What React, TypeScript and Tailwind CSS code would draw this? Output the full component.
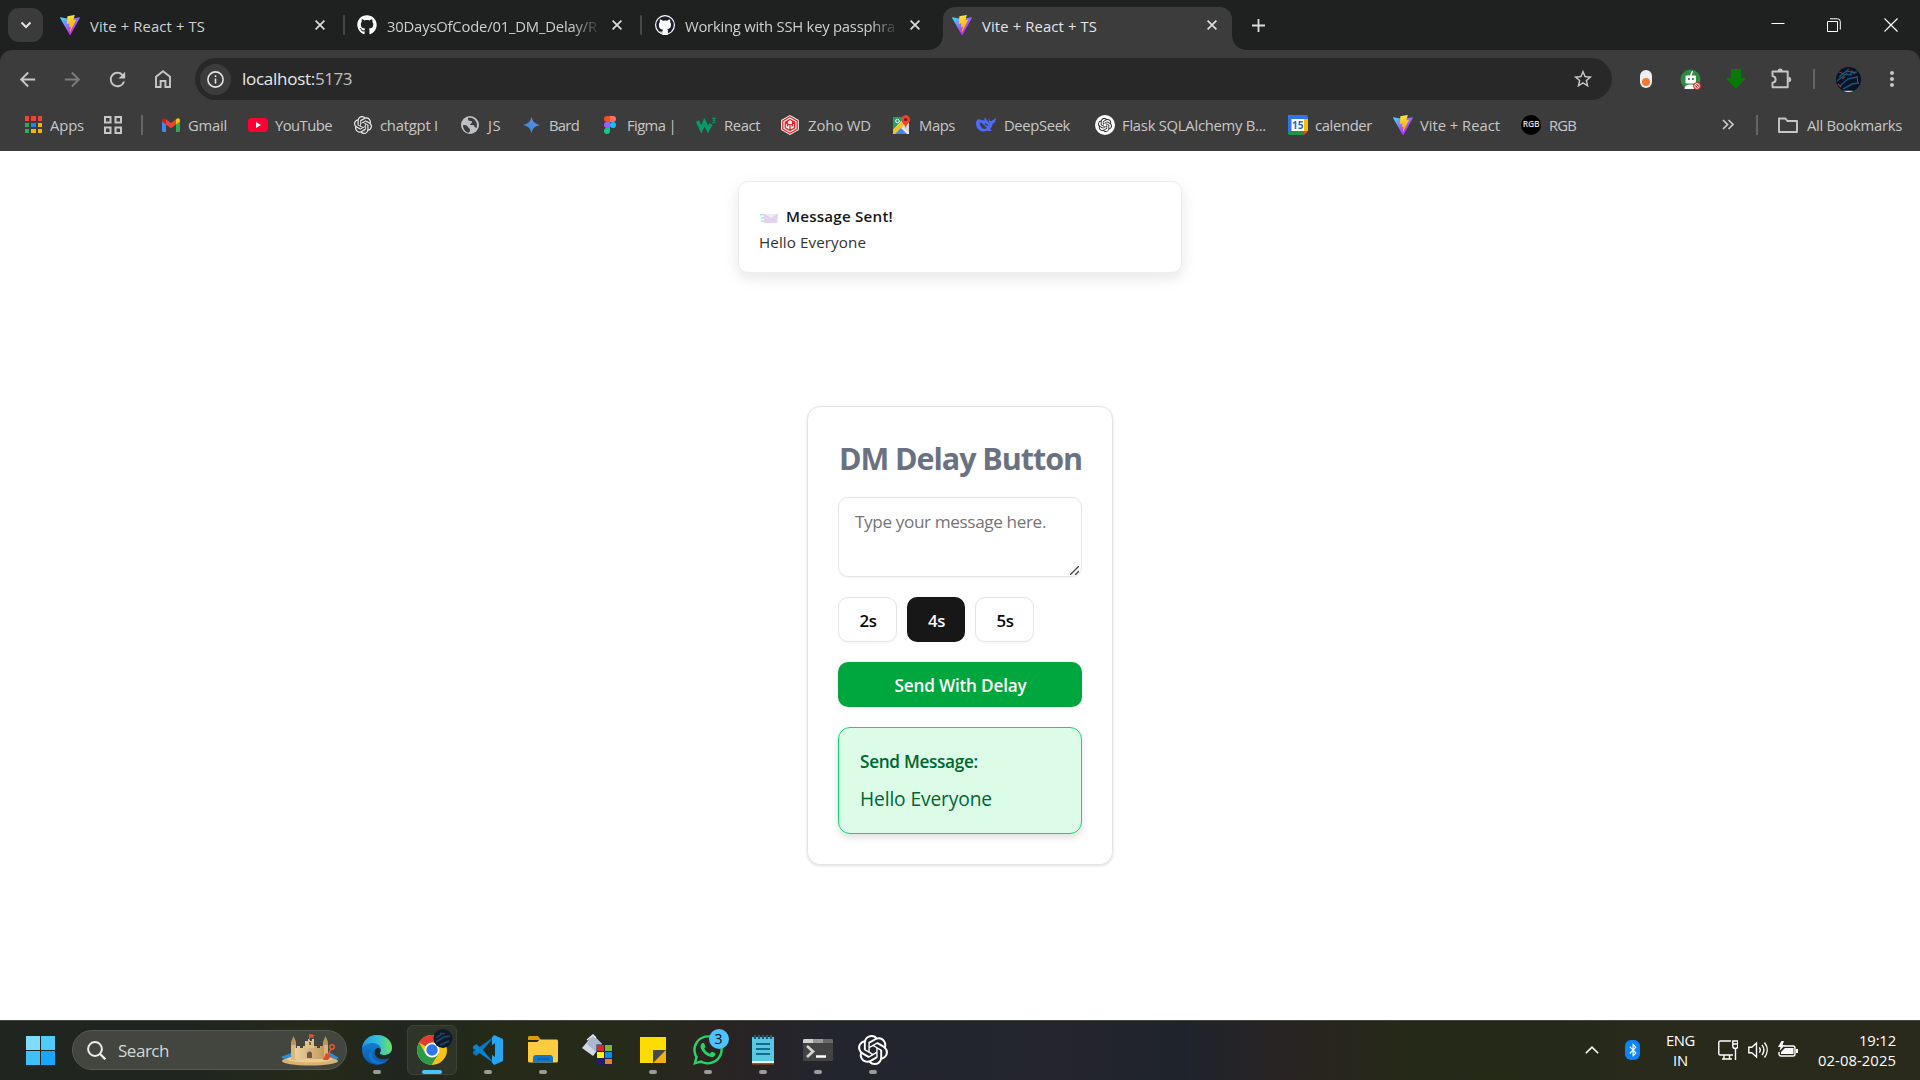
import { useLayoutEffect, useRef, type ReactNode } from "react";
import { FaGithub, FaWhatsapp, FaBluetoothB } from "react-icons/fa";
import { MdArrowBack, MdArrowForward, MdRefresh, MdStarOutline, MdMoreVert } from "react-icons/md";

/* Single line of text tracked so that it fills a given width. */
function Fit({ t, w, className = "" }: { t: string; w: number; className?: string }) {
  const ref = useRef<HTMLSpanElement>(null);
  useLayoutEffect(() => {
    const el = ref.current;
    if (!el) return;
    el.style.letterSpacing = "0px";
    const natural = el.getBoundingClientRect().width;
    el.style.letterSpacing = `${(w - natural) / t.length}px`;
  }, [t, w]);
  return (
    <span className={`block shrink-0 whitespace-nowrap ${className}`} style={{ width: w }}>
      <span ref={ref} className="inline-block">{t}</span>
    </span>
  );
}

function Vite({ id }: { id: string }) {
  return (
    <svg className="h-5 w-5 shrink-0" viewBox="0 0 256 257">
      <defs>
        <linearGradient id={`${id}a`} x1="0%" x2="57%" y1="10%" y2="78%">
          <stop offset="0%" stopColor="#41D1FF" />
          <stop offset="100%" stopColor="#BD34FE" />
        </linearGradient>
        <linearGradient id={`${id}b`} x1="43%" x2="50%" y1="2%" y2="89%">
          <stop offset="0%" stopColor="#FFEA83" />
          <stop offset="8%" stopColor="#FFDD35" />
          <stop offset="100%" stopColor="#FFA800" />
        </linearGradient>
      </defs>
      <path fill={`url(#${id}a)`} d="M255.153 37.938L134.897 252.976c-2.483 4.44-8.862 4.466-11.382.048L.875 37.958c-2.746-4.814 1.371-10.646 6.827-9.67l120.385 21.517a6.537 6.537 0 0 0 2.322-.004l117.867-21.483c5.438-.991 9.574 4.796 6.877 9.62Z" />
      <path fill={`url(#${id}b)`} d="M185.432.063L96.44 17.501a3.268 3.268 0 0 0-2.634 3.014l-5.474 92.456a3.268 3.268 0 0 0 3.997 3.378l24.777-5.718c2.318-.535 4.413 1.507 3.936 3.838l-7.361 36.047c-.495 2.426 1.782 4.5 4.151 3.78l15.304-4.649c2.372-.72 4.652 1.36 4.15 3.788l-11.698 56.621c-.732 3.542 3.979 5.473 5.943 2.437l1.313-2.028l72.516-144.72c1.215-2.423-.88-5.186-3.54-4.672l-25.505 4.922c-2.396.462-4.435-1.77-3.759-4.114l16.646-57.705c.677-2.35-1.37-4.583-3.769-4.113Z" />
    </svg>
  );
}

function OpenAI({ className }: { className: string }) {
  return (
    <svg className={className} viewBox="0 0 24 24" fill="currentColor">
      <path d="M22.2819 9.8211a5.9847 5.9847 0 0 0-.5157-4.9108 6.0462 6.0462 0 0 0-6.5098-2.9A6.0651 6.0651 0 0 0 4.9807 4.1818a5.9847 5.9847 0 0 0-3.9977 2.9 6.0462 6.0462 0 0 0 .7427 7.0966 5.98 5.98 0 0 0 .511 4.9107 6.051 6.051 0 0 0 6.5146 2.9001A5.9847 5.9847 0 0 0 13.2599 24a6.0557 6.0557 0 0 0 5.7718-4.2058 5.9894 5.9894 0 0 0 3.9977-2.9001 6.0557 6.0557 0 0 0-.7475-7.0729zm-9.022 12.6081a4.4755 4.4755 0 0 1-2.8764-1.0408l.1419-.0804 4.7783-2.7582a.7948.7948 0 0 0 .3927-.6813v-6.7369l2.02 1.1686a.071.071 0 0 1 .038.052v5.5826a4.504 4.504 0 0 1-4.4945 4.4944zm-9.6607-4.1254a4.4708 4.4708 0 0 1-.5346-3.0137l.142.0852 4.783 2.7582a.7712.7712 0 0 0 .7806 0l5.8428-3.3685v2.3324a.0804.0804 0 0 1-.0332.0615L9.74 19.9502a4.4992 4.4992 0 0 1-6.1408-1.6464zM2.3408 7.8956a4.485 4.485 0 0 1 2.3655-1.9728V11.6a.7664.7664 0 0 0 .3879.6765l5.8144 3.3543-2.0201 1.1685a.0757.0757 0 0 1-.071 0l-4.8303-2.7865A4.504 4.504 0 0 1 2.3408 7.872zm16.5963 3.8558L13.1038 8.364 15.1192 7.2a.0757.0757 0 0 1 .071 0l4.8303 2.7913a4.4944 4.4944 0 0 1-.6765 8.1042v-5.6772a.79.79 0 0 0-.407-.667zm2.0107-3.0231l-.142-.0852-4.7735-2.7818a.7759.7759 0 0 0-.7854 0L9.409 9.2297V6.8974a.0662.0662 0 0 1 .0284-.0615l4.8303-2.7866a4.4992 4.4992 0 0 1 6.6802 4.66zM8.3065 12.863l-2.02-1.1638a.0804.0804 0 0 1-.038-.0567V6.0742a4.4992 4.4992 0 0 1 7.3757-3.4537l-.142.0805L8.704 5.459a.7948.7948 0 0 0-.3927.6813zm1.0976-2.3654l2.602-1.4998 2.6069 1.4998v2.9994l-2.5974 1.4997-2.6067-1.4997Z" />
    </svg>
  );
}

function Cross({ className = "" }: { className?: string }) {
  return (
    <svg className={`h-2.5 w-2.5 shrink-0 ${className}`} viewBox="0 0 10 10" stroke="#dedede" strokeWidth="1.7">
      <path d="M.6.6l8.8 8.8M9.4.6L.6 9.4" />
    </svg>
  );
}

function TabStrip() {
  return (
    <div className="flex h-[50px] items-center bg-[#1f2120] text-[14.8px] text-[#cfd0cf]">
      <div className="-mt-px ml-2 flex h-[34px] w-[35px] shrink-0 items-center justify-center rounded-[11px] bg-[#3b3b3b]">
        <svg className="h-2 w-3" viewBox="0 0 12 8" fill="none" stroke="#e3e3e3" strokeWidth="2"><path d="M1.5 1.5L6 6l4.5-4.5" /></svg>
      </div>
      <div className="ml-[17px] flex shrink-0 items-center">
        <Vite id="v1" />
        <Fit t="Vite + React + TS" w={115} className="mt-0.5 ml-2.5" />
        <Cross className="ml-[110px]" />
      </div>
      <div className="ml-[18px] h-5 w-0.5 shrink-0 rounded bg-[#464847]" />
      <div className="ml-3 flex shrink-0 items-center">
        <FaGithub className="h-5 w-5 shrink-0 text-white" />
        <Fit t="30DaysOfCode/01_DM_Delay/R" w={210} className="mt-0.5 ml-2.5 [mask-image:linear-gradient(to_right,black_185px,transparent_214px)]" />
        <Cross className="ml-[15px]" />
      </div>
      <div className="ml-[18px] h-5 w-0.5 shrink-0 rounded bg-[#464847]" />
      <div className="ml-[13px] flex shrink-0 items-center">
        <svg className="h-5 w-5 shrink-0" viewBox="0 0 20 20">
          <circle cx="10" cy="10" r="10" fill="#fff" />
          <circle cx="10" cy="10" r="8.8" fill="#1b1f2b" />
          <path fill="#fff" d="M5 4.600c1 0 2 .5 2.700 1.100a9 9 0 0 1 4.600 0c.7-.6 1.700-1.100 2.700-1.100.3.900.3 1.700.1 2.300.7.8 1 1.700 1 2.800 0 3-1.700 4-3.800 4.300.4.500.6 1 .6 1.800V20H7.400v-2.400c-1.900.4-2.400-.7-3.200-1.700 1.200.1 1.500 1.200 3.200.8 0-1 .2-1.500.6-2-2.400-.4-4.100-1.500-4.100-5 0-1.100.4-2 1-2.800-.2-.7-.2-1.500.1-2.300z" />
        </svg>
        <Fit t="Working with SSH key passphra" w={210} className="mt-0.5 ml-2.5 [mask-image:linear-gradient(to_right,black_185px,transparent_214px)]" />
        <Cross className="ml-[15px]" />
      </div>
      <svg className="ml-[7px] h-4 w-4 shrink-0 self-end" viewBox="0 0 16 16"><path d="M16 0v16H0C10 16 16 10 16 0z" fill="#3c3c3c" /></svg>
      <div className="flex h-[43px] w-[289px] shrink-0 items-center self-end rounded-t-xl bg-[#3c3c3c] pb-[7px] pl-[9px] text-[#e6e6e6]">
        <Vite id="v2" />
        <Fit t="Vite + React + TS" w={115} className="mt-0.5 ml-2.5" />
        <Cross className="ml-[110px]" />
      </div>
      <svg className="h-4 w-4 shrink-0 self-end" viewBox="0 0 16 16"><path d="M0 0v16h16C6 16 0 10 0 0z" fill="#3c3c3c" /></svg>
      <svg className="ml-1 h-[13px] w-[13px] shrink-0" viewBox="0 0 13 13" stroke="#dcdcdc" strokeWidth="1.8"><path d="M6.500 0v13M0 6.500h13" /></svg>
      <svg className="ml-auto h-3.5 w-3.5 shrink-0" viewBox="0 0 14 14" stroke="#fff"><path d="M.5 5.500h13" /></svg>
      <svg className="ml-[42px] h-3.5 w-3.5 shrink-0" viewBox="0 0 14 14" fill="none" stroke="#fff"><path d="M.5 3.500h10v10H.5zM3 .8h7.500a2.800 2.800 0 0 1 2.800 2.800v7.900" /></svg>
      <svg className="mr-[22px] ml-[43px] h-3.5 w-3.5 shrink-0" viewBox="0 0 14 14" stroke="#fff" strokeWidth="1.200"><path d="M.5.5l13 13M13.500.5l-13 13" /></svg>
    </div>
  );
}

function Toolbar() {
  return (
    <div className="bg-[#1f2120]">
      <div className="flex h-[50px] items-center rounded-t-xl bg-[#3c3c3c] pt-2 text-[#c7c7c7]">
        <MdArrowBack className="ml-4 h-[23px] w-[23px] shrink-0" />
        <MdArrowForward className="ml-[22px] h-[23px] w-[23px] shrink-0 text-[#7d7d7d]" />
        <MdRefresh className="ml-[22px] h-[23px] w-[23px] shrink-0" />
        <svg className="ml-[26px] h-[18px] w-4 shrink-0" viewBox="0 0 16 18" fill="none" stroke="currentColor" strokeWidth="1.900"><path d="M1 6.800L8 1.300l7 5.500V17h-4.600v-6H5.600v6H1z" /></svg>
        <div className="ml-6 flex h-[42px] w-[1417px] shrink-0 items-center rounded-full bg-[#282828]">
          <div className="ml-[5px] flex h-[31px] w-[31px] items-center justify-center rounded-full bg-[#3c3c3c]">
            <svg className="h-[17px] w-[17px]" viewBox="0 0 17 17" fill="none" stroke="#e3e3e3" strokeWidth="1.600"><circle cx="8.500" cy="8.500" r="7.600" /><path d="M8.500 7.500v5M8.500 4.300V6" /></svg>
          </div>
          <Fit t="localhost:" w={73} className="ml-[11px] text-[17px] text-[#e8e8e8]" />
          <Fit t="5173" w={37} className="text-[17px] text-[#c0c0c0]" />
          <MdStarOutline className="mr-[18px] ml-auto h-[22px] w-[22px]" />
        </div>
        <svg className="ml-[28px] h-[18px] w-3 shrink-0" viewBox="0 0 12 18"><rect width="12" height="18" rx="6" fill="#efefef" /><circle cx="6" cy="12" r="4" fill="#f47a30" /></svg>
        <svg className="ml-[28px] h-[21px] w-[21px] shrink-0" viewBox="0 0 21 21">
          <circle cx="10.500" cy="10.500" r="10" fill="#2f8a43" />
          <path d="M12.500 2l-2 5" stroke="#fff" strokeWidth="1.500" />
          <rect x="5.500" y="6.500" width="10.500" height="8" rx="1" fill="#fff" />
          <path d="M8 9h1.800v2H8zM12 9h1.800v2H12z" fill="#2f8a43" />
          <path d="M4.500 20c0-3 2-4.500 6-4.500s5 1.500 5 4.500z" fill="#fff" />
          <circle cx="17" cy="17" r="3.800" fill="#e8322f" /><circle cx="17" cy="17" r="2.300" fill="none" stroke="#fff" strokeWidth=".9" /><path d="M15.400 15.400l3.200 3.200" stroke="#fff" strokeWidth=".9" />
        </svg>
        <svg className="ml-[25px] h-5 w-5 shrink-0" viewBox="0 0 20 20"><path d="M5 0h10v9h5l-10 11L0 9h5z" fill="#087a08" /></svg>
        <svg className="mb-0.5 ml-[25px] h-[21px] w-[21px] shrink-0" viewBox="0 0 21 21"><path d="M1.500 3.500h15.200v15.700H1.500v-4.500c4.200-.6 4.200-6 0-6.600z" fill="none" stroke="currentColor" strokeWidth="1.900" strokeLinejoin="round" /><path d="M6.600 3a2.600 2.600 0 0 1 5.200 0zM17.500 8.700a2.700 2.700 0 0 1 0 5.400z" fill="currentColor" /></svg>
        <div className="ml-[21px] h-5 w-0.5 shrink-0 bg-[#656565]" />
        <svg className="ml-[21px] h-[25px] w-[25px] shrink-0" viewBox="0 0 25 25">
          <clipPath id="av"><circle cx="12.500" cy="12.500" r="12.500" /></clipPath>
          <g clipPath="url(#av)">
            <path fill="#071426" d="M0 0h25v25H0z" />
            <path d="M3 10L13 2M1 14l9-7 6 1M4 19l8-7 9-2M7 22l9-5 7-1M14 6l7-1" stroke="#1a527c" strokeWidth="1.500" fill="none" />
            <path d="M3 5l5 2M10 5l6-1 3 3M2 17l3 3M21 9l1 8M6 12l3-2" stroke="#8b3b32" strokeWidth="1.100" fill="none" />
            <path d="M8 24.300h9" stroke="#dfe6ea" strokeWidth="1.300" />
          </g>
        </svg>
        <MdMoreVert className="ml-[19px] h-6 w-6 shrink-0" />
      </div>
    </div>
  );
}

function Bookmark({ t, w, ml, gap, children }: { t: string; w: number; ml: number; gap: number; children: ReactNode }) {
  return (
    <div className="flex shrink-0 items-center" style={{ marginLeft: ml, columnGap: gap }}>
      {children}
      <Fit t={t} w={w} />
    </div>
  );
}

const appDots = ["#f44336", "#f44336", "#f44336", "#34a853", "#1e88e5", "#f4b400", "#34a853", "#f4b400", "#f4b400"];

function Bookmarks() {
  return (
    <div className="flex h-[51px] items-center bg-[#3c3c3c] pb-[1.500px] text-[14.800px] text-[#c7c7c7]">
      <Bookmark t="Apps" w={34} ml={25} gap={8}>
        <div className="grid h-[17px] w-[17px] grid-cols-3 gap-0.5">
          {appDots.map((c, i) => <span key={i} style={{ background: c }} />)}
        </div>
      </Bookmark>
      <svg className="ml-5 h-[18px] w-[18px] shrink-0" viewBox="0 0 18 18" fill="none" stroke="#c7c7c7" strokeWidth="2"><path d="M1 1h5.500v5.500H1zM11.500 1H17v5.500h-5.500zM1 11.500h5.500V17H1zM11.500 11.500H17V17h-5.500z" /></svg>
      <div className="ml-[19px] h-5 w-0.5 shrink-0 bg-[#656565]" />
      <Bookmark t="Gmail" w={39} ml={19} gap={8}>
        <svg className="h-3.5 w-[18px]" viewBox="0 0 18 14"><path d="M0 2v10.800c0 .7.500 1.200 1.200 1.200H4V5z" fill="#4285f4" /><path d="M14 5v9h2.800c.7 0 1.200-.5 1.200-1.200V2z" fill="#34a853" /><path d="M4 1.300v5.200l5 3.800 5-3.800V1.300L9 5z" fill="#ea4335" /><path d="M0 2.200v1.300l4 3V1.200C2-.5 0 .3 0 2.200z" fill="#c5221f" /><path d="M18 2.200v1.300l-4 3V1.200c2-1.700 4-.9 4 1z" fill="#fbbc04" /></svg>
      </Bookmark>
      <Bookmark t="YouTube" w={57} ml={21} gap={7}>
        <svg className="h-3.5 w-5" viewBox="0 0 20 14"><rect width="20" height="14" rx="3.500" fill="#ff0033" /><path d="M8 4l5 3-5 3z" fill="#fff" /></svg>
      </Bookmark>
      <Bookmark t="chatgpt I" w={58} ml={22} gap={8}><OpenAI className="h-[18px] w-[18px] text-[#ededed]" /></Bookmark>
      <Bookmark t="JS" w={13} ml={23} gap={9}>
        <svg className="h-[18px] w-[18px]" viewBox="0 0 18 18"><circle cx="9" cy="9" r="9" fill="#bdc1c6" /><path d="M2 9c2 0 4 0 5 2s2 1 2 3-1 2-1 2.800C4.500 16.500 2 13 2 9zM7 2c0 2 0 3 2.500 3S11 7 9.500 8s1 1 2.500 1 1.500 3 3.500 3c1-3 .5-6-2-8.500C12 2 9 1.500 7 2z" fill="#3c3c3c" /></svg>
      </Bookmark>
      <Bookmark t="Bard" w={30} ml={22} gap={9}>
        <svg className="h-[18px] w-[17px]" viewBox="0 0 18 18"><defs><linearGradient id="gm" x1="0" y1="1" x2="1" y2="0"><stop stopColor="#3487f5" /><stop offset=".55" stopColor="#4c8ddc" /><stop offset="1" stopColor="#7b93c9" /></linearGradient></defs><path d="M9 0c.8 5.200 3.800 8.200 9 9-5.200.8-8.200 3.800-9 9-.8-5.200-3.800-8.200-9-9 5.200-.8 8.200-3.800 9-9z" fill="url(#gm)" /></svg>
      </Bookmark>
      <Bookmark t="Figma |" w={49} ml={25} gap={11}>
        <svg className="h-[18px] w-3" viewBox="0 0 12 18"><path d="M3 0h3v6H3a3 3 0 0 1 0-6z" fill="#f24e1e" /><path d="M6 0h3a3 3 0 0 1 0 6H6z" fill="#ff7262" /><path d="M3 6h3v6H3a3 3 0 0 1 0-6z" fill="#a259ff" /><circle cx="9" cy="9" r="3" fill="#1abcfe" /><path d="M3 12h3v3a3 3 0 1 1-3-3z" fill="#0acf83" /></svg>
      </Bookmark>
      <Bookmark t="React" w={36} ml={20} gap={8}>
        <svg className="h-4 w-5" viewBox="0 0 20 16" fill="none" stroke="#079b6b"><path d="M1.500 4l3.800 8.500L8.500 5l3.500 7.500L15 7" strokeWidth="3.500" /><path d="M16 1.300h3l-1.600 1.900c2.600.1 2 3.300-1.200 2.400" strokeWidth="1.100" /></svg>
      </Bookmark>
      <Bookmark t="Zoho WD" w={63} ml={20} gap={8}>
        <svg className="h-5 w-5" viewBox="0 0 20 20"><path d="M10 0l8.800 5v10L10 20l-8.800-5V5z" fill="#fff" /><path d="M10 1.800l7.200 4.100v8.200L10 18.200l-7.200-4.100V5.900z" fill="#fff" stroke="#e6282b" strokeWidth="1.300" /><path d="M10 4.500l4.700 2.700v5.600L10 15.500l-4.700-2.700V7.200zM5.300 7.200L10 10l4.700-2.800M10 10v5.500M7.500 6v5.500M12.500 6v5.500" fill="none" stroke="#e6282b" strokeWidth="1.400" /></svg>
      </Bookmark>
      <Bookmark t="Maps" w={36} ml={22} gap={8}>
        <svg className="h-5 w-[18px]" viewBox="0 0 18 20"><path d="M0 2h16v17H0z" fill="#e8eaed" /><path d="M0 2h12L0 15z" fill="#1ea362" /><path d="M0 15L14 1l2 2v3L2 19H0z" fill="#fbc117" /><path d="M2 19l6-6 6 6z" fill="#4285f4" /><path d="M9 11l7 7V9z" fill="#d8d8d8" /><circle cx="4.500" cy="6" r="1.800" fill="none" stroke="#fff" /><path d="M12.700 0A4.500 4.500 0 0 0 8.500 5c0 3 3.500 4 4.200 8 .7-4 4.300-5 4.300-8a4.500 4.500 0 0 0-4.300-5z" fill="#ea4335" /><circle cx="12.700" cy="4.500" r="1.600" fill="#811411" /></svg>
      </Bookmark>
      <Bookmark t="DeepSeek" w={66} ml={21} gap={8}>
        <svg className="h-[15px] w-5" viewBox="0 0 20 15"><path d="M13 1c0 1.800.8 3 2.500 3.300C16.500 3 17.500 2.500 20 1c0 3-1.200 5-3.200 5.600-.3 2.400-1.500 4.400-2.800 5.600.7.500 1.300.8 2 1-2 1.400-4 .8-5 .4C5 16.500 0 12 0 6.500 0 3 2 1.500 4.500 2.500c2 .8 3 1.300 4.500.8C8 2.500 8.300 1.200 9 .3c1 3 3.500 3.700 4.500 6.700.5-1.200-1.500-3.500-.5-6z" fill="#4d6bfe" /><path d="M3.500 5.500c3-.3 4.500 3.200 7.500 5.700C7.500 13.500 4.500 10.500 3.500 5.500z" fill="#3c3c3c" /><path d="M9 6.500l3 2.500" stroke="#3c3c3c" strokeWidth="1.200" /></svg>
      </Bookmark>
      <Bookmark t="Flask SQLAlchemy B..." w={144} ml={25} gap={7}>
        <span className="flex h-5 w-5 items-center justify-center rounded-full bg-white text-[#222]"><OpenAI className="h-3.5 w-3.5" /></span>
      </Bookmark>
      <Bookmark t="calender" w={57} ml={22} gap={7}>
        <svg className="h-5 w-5" viewBox="0 0 20 20"><path d="M0 0h18a2 2 0 0 1 2 2v14H0z" fill="#2f74e8" /><path d="M16 4h4v12h-4z" fill="#fbbc04" /><path d="M0 16h16v4H1.500A1.500 1.500 0 0 1 0 18.500z" fill="#21934b" /><path d="M16 16h4l-4 4z" fill="#ea4335" /><path d="M3.500 4H16v12H3.500z" fill="#fff" /><text x="9.700" y="14" textAnchor="middle" fontFamily="Open Sans" fontWeight="700" fontSize="10" fill="#1967d2">15</text></svg>
      </Bookmark>
      <Bookmark t="Vite + React" w={80} ml={21} gap={7}><Vite id="v3" /></Bookmark>
      <Bookmark t="RGB" w={27} ml={21} gap={8}>
        <span className="flex h-5 w-5 items-center justify-center rounded-full bg-black text-[8.500px] font-semibold tracking-tight text-[#ddd]">RGB</span>
      </Bookmark>
      <svg className="ml-auto h-[11px] w-3 shrink-0" viewBox="0 0 12 11" fill="none" stroke="#c7c7c7" strokeWidth="1.700"><path d="M1 1l4.500 4.500L1 10M6.500 1L11 5.500 6.500 10" /></svg>
      <div className="ml-[22px] h-5 w-0.5 shrink-0 bg-[#656565]" />
      <div className="mr-[18px] flex items-center">
        <svg className="mr-[9px] ml-5 h-4 w-5" viewBox="0 0 20 16" fill="none" stroke="#c7c7c7" strokeWidth="1.900" strokeLinejoin="round"><path d="M1 1.500h6.500L9.300 4H19v11H1z" /></svg>
        <Fit t="All Bookmarks" w={95} />
      </div>
    </div>
  );
}

function Page() {
  return (
    <div className="flex h-[869px] flex-col items-center bg-white pt-[30px]">
      <div className="flex h-[92px] w-[444px] flex-col rounded-[10px] border border-[#ededed] bg-white pt-[21px] pl-5 text-[15.200px] leading-[26px] text-[#171717] shadow-[0_5px_15px_rgba(0,0,0,0.1)]">
        <div className="flex items-center">
          <svg className="mt-[5px] ml-px h-[9px] w-[18px]" viewBox="0 0 18 9"><path d="M4 0h14l-1 9H4z" fill="#e2d3f0" /><path d="M4 0l7 5 7-5" fill="#f2e9f8" stroke="#cdbbe0" strokeWidth=".5" /><path d="M0 .8h4M1 4h3M1 7h3" stroke="#77d5ee" strokeWidth="1" /></svg>
          <Fit t="Message Sent!" w={107} className="ml-2 font-semibold" />
        </div>
        <Fit t="Hello Everyone" w={107} className="text-[#333]" />
      </div>
      <div className="mt-[133px] flex h-[459px] w-[306px] flex-col rounded-[13px] border border-[#e5e5e5] bg-white px-[30px] pt-[31px] shadow-[0_1px_3px_rgba(0,0,0,0.12)]">
        <Fit t="DM Delay Button" w={243} className="ml-px text-[30.500px] leading-[40px] font-bold text-[#6a7282]" />
        <div className="mt-[19px] flex h-[80px] justify-between rounded-[10px] border border-[#e5e5e5] pt-[11px] pl-4 shadow-[0_1px_2px_rgba(0,0,0,0.05)]">
          <Fit t="Type your message here." w={191} className="text-[17.200px] leading-[26px] text-[#757575]" />
          <svg className="mr-0.5 mb-px h-[9px] w-[9px] self-end" viewBox="0 0 9 9" stroke="#444" strokeWidth="1.300"><path d="M0 9l9-9M5 9l4-4" /></svg>
        </div>
        <div className="mt-5 flex gap-2.5 text-[16.800px] font-semibold text-[#0a0a0a]">
          <div className="flex h-[45px] w-[59px] items-center justify-center rounded-[10px] border border-[#e5e5e5] pt-0.5 pl-px shadow-[0_1px_2px_rgba(0,0,0,0.05)]"><Fit t="2s" w={17} /></div>
          <div className="flex h-[45px] w-[58px] items-center justify-center rounded-[10px] bg-[#171717] pt-0.5 pl-px text-[#fafafa]"><Fit t="4s" w={17} /></div>
          <div className="flex h-[45px] w-[59px] items-center justify-center rounded-[10px] border border-[#e5e5e5] pt-0.5 pl-px shadow-[0_1px_2px_rgba(0,0,0,0.05)]"><Fit t="5s" w={17} /></div>
        </div>
        <div className="mt-5 flex h-[45px] items-center justify-center rounded-[10px] bg-[#00a63e] pt-0.5 pl-px text-[17.200px] font-semibold text-white">
          <Fit t="Send With Delay" w={132} />
        </div>
        <div className="mt-5 h-[107px] rounded-xl border border-[#05df72] bg-[#dcfce7] pt-5 pl-[21px] text-[#016630] shadow-[0_4px_7px_rgba(0,0,0,0.12)]">
          <Fit t="Send Message:" w={118} className="text-[17.200px] leading-7 font-semibold" />
          <Fit t="Hello Everyone" w={132} className="mt-2 text-[19.200px] leading-[30px]" />
        </div>
      </div>
    </div>
  );
}

function Task({ children, dot = true }: { children: ReactNode; dot?: boolean }) {
  return (
    <div className="flex h-full w-[55px] shrink-0 flex-col items-center pt-2.5">
      <div className="flex h-[37px] items-center justify-center">{children}</div>
      {dot && <div className="mt-0.5 h-1 w-2 rounded-full bg-[#9b9b99]" />}
    </div>
  );
}

function Taskbar() {
  return (
    <div className="flex h-[60px] items-center border-t border-[#45483f] bg-[linear-gradient(to_right,#20261f_0px,#20261f_200px,#252a18_320px,#20261e_400px,#252b18_500px,#252a1a_640px,#2a2423_720px,#23252e_830px,#24252e_1070px,#1e232c_1180px,#292422_1290px,#262918_1400px,#242919_1560px,#292a1b_1650px,#292a1b_1920px)] pb-px text-white">
      <div className="ml-[26px] grid h-[29px] w-[29px] shrink-0 grid-cols-2 gap-px">
        <span className="bg-[#7ddcff]" /><span className="bg-[#4fcbff]" /><span className="bg-[#3fc0fb]" /><span className="bg-[#1aa7fa]" />
      </div>
      <div className="ml-[17px] flex h-10 w-[275px] shrink-0 items-center rounded-full border border-[#565a54] bg-[#42463e]">
        <svg className="ml-3.5 h-[19px] w-[19px]" viewBox="0 0 19 19" fill="none" stroke="#ececec" strokeWidth="2"><circle cx="8" cy="8" r="6.900" /><path d="M13 13l5.300 5.300" strokeWidth="2.300" /></svg>
        <Fit t="Search" w={51} className="mt-0.5 ml-3 text-[17px] text-[#d6d7d4]" />
        <svg className="mr-1.5 ml-auto h-8 w-[60px]" viewBox="0 0 60 32">
          <defs><linearGradient id="sand" x1="0" x2="1"><stop stopColor="#e9d2a4" /><stop offset="1" stopColor="#c39a5d" /></linearGradient></defs>
          <path d="M1 23l10-4h40l8 5-8 4H8z" fill="#2c8fd0" />
          <ellipse cx="30" cy="27" rx="28" ry="4.500" fill="#d9b172" />
          <ellipse cx="30" cy="25" rx="23" ry="3.500" fill="#edcc91" />
          <path d="M11 10h5v16h-5zM43 10h5v16h-5z" fill="#d8b67b" />
          <path d="M11 8l2.500-6L16 8v3h-5zM43 8l2.500-6L48 8v3h-5z" fill="#bb935d" />
          <path d="M15 14h2v-2h3v2h3v-2h3v2h8v-2h3v2h3v-2h4v13H15z" fill="url(#sand)" />
          <path d="M26 7h2V5h2v2h2V5h2v9h-9V7z" fill="#e1c089" />
          <path d="M27 24v-4a2.500 2.500 0 0 1 5 0v4z" fill="#6f5940" /><path d="M29 8h2v3h-2z" fill="#7d6446" />
          <path d="M29 0l6 1-2 1.500 1 1.500-4-.5V6h-1z" fill="#ee4b2b" />
          <circle cx="52" cy="13" r="2.200" fill="none" stroke="#ef5a2c" strokeWidth="1.500" /><path d="M51 15l-3 6" stroke="#ef5a2c" strokeWidth="1.500" /><path d="M46 19l5 3-3 4h-5z" fill="#e5482a" />
        </svg>
      </div>
      <div className="ml-0.5 flex h-full">
        <Task>
          <svg className="h-[30px] w-[30px]" viewBox="0 0 30 30">
            <defs><linearGradient id="e1" x1="0" x2="1"><stop stopColor="#1d9be5" /><stop offset=".55" stopColor="#35c1d8" /><stop offset="1" stopColor="#6fe25b" /></linearGradient><linearGradient id="e2" x1="0" y1="0" x2="0" y2="1"><stop stopColor="#1a8ade" /><stop offset="1" stopColor="#0a56ad" /></linearGradient></defs>
            <circle cx="15" cy="15" r="15" fill="url(#e2)" />
            <path d="M0 14C1 5 7 0 15 0c9 0 15 6 15 12.500 0 5-4 7.500-8 7.500-3 0-5-1-4-2.500 3-4-1-9.500-7-9.500C6 8 1 10 0 14z" fill="url(#e1)" />
            <path d="M11 14c-3 7 1 13 8 13 4 0 7-1.500 9-4.500C24 28 16 31 10 27c-5-4-4-10 1-13z" fill="#1276cc" />
            <path d="M18 17.500c-1 1.500 1 2.500 4 2.500 3.500 0 6.500-1 8-4.500v5c-.5 1-1.200 2-2 2.500-4 2-13 2.500-15-3.500-1-3 0-6.500 3-6.500 2 0 4 2 2 4.500z" fill="#20271f" />
          </svg>
        </Task>
        <div className="mt-1 ml-[3px] flex h-[50px] w-[50px] shrink-0 flex-col items-center rounded-md border border-[#3d4436] bg-[#2e3528] pt-[3px]">
          <svg className="ml-0.5 h-[37px] w-[42px] shrink-0" viewBox="0 0 42 37">
            <g transform="translate(5 6)"><circle cx="15" cy="15" r="15" fill="#fbc116" /><path d="M15 15L2 7.500A15 15 0 0 1 28 7.500H15z" fill="#e33b2e" /><path d="M2 7.500a15 15 0 0 0 12.500 22.500L21.500 18.700 15 22.500 8.500 18.700z" fill="#299c4a" /><circle cx="15" cy="15" r="7.500" fill="#fff" /><circle cx="15" cy="15" r="5.700" fill="#3077e8" /></g>
            <circle cx="31" cy="9.500" r="9.500" fill="#101a28" /><path d="M24 9l7-5M24 13l8-5 6-1M28 16l9-4" stroke="#1c4a72" strokeWidth="1.500" fill="none" /><path d="M28 4l5 1" stroke="#6c3430" />
          </svg>
          <div className="mt-1 h-1 w-5 shrink-0 rounded-full bg-[#4cc2ff]" />
        </div>
        <div className="w-[3px] shrink-0" />
        <Task>
          <svg className="h-[30px] w-[30px]" viewBox="0 0 30 30"><path d="M22 1L8 17 3 21l-3-2.500v-2L22 1z" fill="#0879c4" /><path d="M22 29L8 13 3 9l-3 2.500v2L22 29z" fill="#0a84d2" /><path d="M21 0l9 4v22l-9 4-2-2.500V2.500z" fill="#27a4f2" /><path d="M22 8v14l-9-7z" fill="#232a1a" /></svg>
        </Task>
        <Task>
          <svg className="h-[27px] w-[30px]" viewBox="0 0 30 27"><path d="M0 1.500C0 .7.700 0 1.500 0H10l3 4H0z" fill="#dd9b05" /><path d="M0 6h9l3-2.500h16.500c.8 0 1.500.7 1.500 1.500v20c0 .8-.7 1.500-1.500 1.500h-27C.7 26.500 0 25.800 0 25z" fill="#fdcb3f" /><path d="M5 26.500V22c0-1.700 1.300-3 3-3h14c1.700 0 3 1.300 3 3v4.500z" fill="#0c79cb" /><path d="M9 23h12" stroke="#06518f" strokeWidth="1.200" /></svg>
        </Task>
        <Task dot={false}>
          <svg className="h-[31px] w-[31px]" viewBox="0 0 31 31"><path d="M11 1l9 9-9 12-11-8z" fill="#d2dae8" /><path d="M11 1l9 9-6 8-9-8z" fill="#aab7cf" /><path d="M5 6l6-5 3 3" stroke="#e9eef5" strokeWidth="1.500" fill="none" /><path d="M14.500 10.500h16v20.500h-16z" fill="#18224b" /><path d="M15 11h7v6h-7z" fill="#dd2b1f" /><path d="M23 11h7v6h-7z" fill="#80b82c" /><path d="M15 18h7v6h-7z" fill="#fff01c" /><path d="M23 18h7v6h-7z" fill="#0a8fe0" /><path d="M15 25h7v5h-7z" fill="#2b1a72" /><path d="M23 25h7v5h-7z" fill="#ec8023" /></svg>
        </Task>
        <Task>
          <svg className="h-[26px] w-[26px]" viewBox="0 0 26 26"><path d="M0 0h26v14L13 26H0z" fill="#fddc00" /><path d="M13 26h13V13z" fill="#eeb211" /><path d="M13 13h13L13 26z" fill="#484848" /></svg>
        </Task>
        <Task>
          <div className="relative">
            <FaWhatsapp className="h-[34px] w-[34px] text-[#25d366]" />
            <span className="absolute -top-1 left-[18px] flex h-5 w-5 items-center justify-center rounded-full bg-[#4cc2ff] text-[14px] text-[#111]">3</span>
          </div>
        </Task>
        <Task>
          <svg className="h-[30px] w-[22px]" viewBox="0 0 22 30"><path d="M0 26h22v3.500H0z" fill="#a5501b" /><path d="M0 24h22v4H0z" fill="#f0f0f0" /><path d="M0 2h22v24H0z" fill="#58c7df" /><path d="M4 9h14M4 14h14M4 19h14" stroke="#126b8f" strokeWidth="1.800" /><path d="M3 0v4M7 0v4M11 0v4M15 0v4M19 0v4" stroke="#17617d" strokeWidth="2.200" /></svg>
        </Task>
        <Task>
          <svg className="h-[22px] w-[30px]" viewBox="0 0 30 22"><rect width="30" height="22" rx="1.500" fill="#434343" /><path d="M0 1.500C0 .7.700 0 1.500 0H10v4H0z" fill="#d0d0d0" /><path d="M10 0h10v4H10z" fill="#999" /><path d="M20 0h8.500c.8 0 1.500.7 1.500 1.500V4H20z" fill="#6a6a6a" /><path d="M4 7l6 5.500-6 5.500" stroke="#d5d5d5" strokeWidth="2.700" fill="none" /><path d="M13 17.500h10" stroke="#fff" strokeWidth="2.500" /></svg>
        </Task>
        <Task><OpenAI className="h-[30px] w-[30px]" /></Task>
      </div>
      <div className="-mt-px mr-6 ml-auto flex items-center">
        <svg className="h-2 w-3.5" viewBox="0 0 14 8" fill="none" stroke="#fff" strokeWidth="1.600"><path d="M.8 7.200L7 1.200l6.200 6" /></svg>
        <span className="ml-[26px] flex h-5 w-[15px] items-center justify-center rounded-[6px] bg-[#0a84ff]"><FaBluetoothB className="h-3.5 w-3.5" /></span>
        <div className="ml-[26px] flex flex-col items-center text-[14.800px] leading-5">
          <Fit t="ENG" w={29} /><Fit t="IN" w={15} />
        </div>
        <svg className="ml-[23px] h-5 w-5" viewBox="0 0 20 20" fill="none" stroke="#fff" strokeWidth="1.400"><path d="M13 1H2.500C1.500 1 .8 1.700.8 2.500v11c0 .8.700 1.500 1.500 1.500H15M6 15v4M11.500 15v4M4 19h10M17.500 9v11" /><path d="M14.800 1h5v5c0 2-1 2.500-2.500 2.500S14.800 8 14.800 6zM15 4h5" /></svg>
        <svg className="ml-2.5 h-[18px] w-5" viewBox="0 0 20 18" fill="none" stroke="#fff" strokeWidth="1.400"><path d="M.8 6.200v5.600h3L8.500 16V2L3.800 6.200zM11.300 6.300c1.200 1.700 1.200 3.700 0 5.400M14 3.800c2.400 3.200 2.400 7.200 0 10.400M16.500 1.500c3.600 4.600 3.600 10.400 0 15" /></svg>
        <svg className="ml-2.5 h-[18px] w-5" viewBox="0 0 20 18"><path d="M6 5h9c1.200 0 2 .8 2 2v6c0 1.200-.8 2-2 2H3c-1.200 0-2-.8-2-2v-2" fill="none" stroke="#fff" strokeWidth="1.400" /><path d="M7 7h8.500v6H3v-2zM18 8h2v4h-2zM3.500 0L0 6h2.500L1.500 10 7 4H4.500L6 0z" fill="#fff" /></svg>
        <div className="ml-5 flex flex-col items-end text-[14.800px] leading-5">
          <Fit t="19:12" w={37} /><Fit t="02-08-2025" w={78} />
        </div>
      </div>
    </div>
  );
}

export default function App() {
  return (
    <div className="h-[1080px] w-[1920px] overflow-hidden font-['Open_Sans',sans-serif]">
      <TabStrip />
      <Toolbar />
      <Bookmarks />
      <Page />
      <Taskbar />
    </div>
  );
}
